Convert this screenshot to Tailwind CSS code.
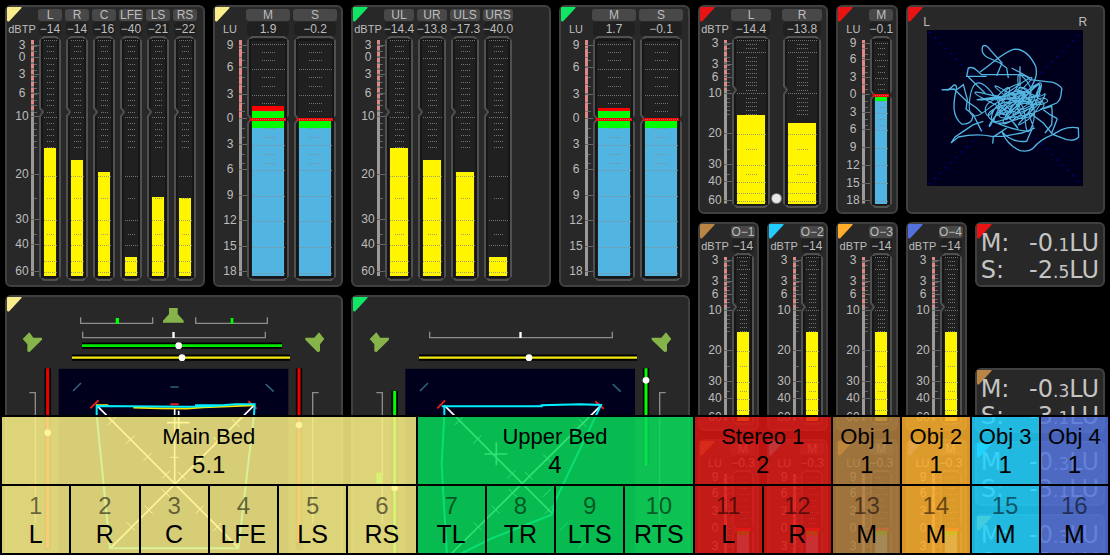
<!DOCTYPE html>
<html lang="en">
<head>
  <meta charset="UTF-8" />
  <meta name="viewport" content="width=device-width, initial-scale=1.0" />
  <title>Loudness Meters</title>
  <script src="https://cdn.jsdelivr.net/npm/@tailwindcss/browser@4"></script>
</head>
<body class="relative h-screen overflow-hidden bg-black font-['Liberation_Sans',Arial,sans-serif] text-xs text-[#bdbdbd]">

  <!-- Meter bridge -->
  <main class="grid h-full grid-cols-[685fr_407fr] items-start gap-2 overflow-hidden p-[5px] pb-0">

    <!-- Beds -->
    <div class="grid grid-cols-[200fr_130fr_200fr_131fr] grid-rows-[282px_338px] gap-2">
      <section data-meter="main-peak"></section>
      <section data-meter="main-lufs"></section>
      <section data-meter="upper-peak"></section>
      <section data-meter="upper-lufs"></section>

      <!-- Main bed surround view -->
      <section class="relative col-span-2 rounded-md border-2 border-[#404040] bg-[#282828]">
        <svg class="absolute top-0 left-0 size-[15px] text-[#f8ec8c]" viewBox="0 0 15 15"><path fill="currentColor" d="M1 0H14Q15 0 14.500 1L2 14.500Q0 15 0 13V1Q0 0 1 0Z" /></svg>
        <svg class="block w-full" viewBox="21 21 1002 774" fill="none">
          <g stroke="#8c8c8c" stroke-width="4">
            <path d="M242 82V100H458V82M587 82V100H802V82M248 125V143H796V125" />
            <path d="M88 308H106V700M956 308H938V700" />
          </g>
          <g fill="#86b44a">
            <path d="M507 54H533V72L551 92V98H489V92L507 72Z" />
            <path d="M68 147L88 127L100 143H126V149L88 187L82 184V163Z" />
            <path d="M973 147L957 127L943 143H916V149L953 187L960 184V163Z" />
          </g>
          <path fill="#00ff00" d="M347 84H357V102H347ZM692 84H700V102H692Z" />
          <path fill="#fff" d="M517 126H524V144H517Z" />
          <path stroke="#000" stroke-width="19" d="M246 167H846M216 203H870M143 235V780M897 235V780" />
          <path stroke="#00e800" stroke-width="8" d="M246 167H846" />
          <path stroke="#f4ea10" stroke-width="7" d="M216 203H870" />
          <path stroke="#f00000" stroke-width="9" d="M143 235V775M897 235V755" />
          <path fill="#00001c" d="M176 236H865V795H176Z" />
          <path stroke="#2a6278" stroke-width="5" d="M219 303L243 279M797 282L821 305M511 291H536" />
          <path stroke="#e02020" stroke-width="6" d="M271 355L296 331M745 334L770 356M511 343H536" />
          <g stroke="#fff" stroke-width="5">
            <path d="M290 346L715 773M762 346L333 773M524 355V582M536 362V430M501 398H569" />
            <path stroke-width="3" d="M323 405L347 382M378 461L403 437M430 513L455 489M487 565L511 541M695 387L719 411M640 441L664 465M588 493L612 517M533 545L557 569M485 597L510 621M434 647L458 671M380 697L404 721M587 671L611 647M640 723L664 699M511 502H536" />
          </g>
          <path stroke="#ffe600" stroke-width="5" d="M288 345H325M400 353L480 355L560 356L610 352L762 346" />
          <path stroke="#00f0ff" stroke-width="6" d="M290 375V348L380 349L560 350L640 348L705 343H764L762 375L715 775H330L290 375M585 346H680" />
          <g fill="#fff">
            <circle cx="536" cy="167" r="10" /><circle cx="546" cy="203" r="10" />
            <circle cx="143" cy="428" r="10" /><circle cx="897" cy="405" r="10" />
          </g>
          <path fill="#f02020" d="M88 582H104V592H88ZM941 582H956V592H941Z" />
        </svg>
      </section>

      <!-- Upper bed surround view -->
      <section class="relative col-span-2 rounded-md border-2 border-[#404040] bg-[#282828]">
        <svg class="absolute top-0 left-0 size-[15px] text-[#10e664]" viewBox="0 0 15 15"><path fill="currentColor" d="M1 0H14Q15 0 14.500 1L2 14.500Q0 15 0 13V1Q0 0 1 0Z" /></svg>
        <svg class="block w-full" viewBox="24 21 1005 774" fill="none">
          <g stroke="#8c8c8c" stroke-width="4">
            <path d="M254 125V143H802V125M94 308H112V700M962 308H944V700" />
          </g>
          <g fill="#86b44a">
            <path d="M74 147L94 127L106 143H132V149L94 187L88 184V163Z" />
            <path d="M979 147L963 127L949 143H920V149L959 187L966 184V163Z" />
          </g>
          <path fill="#fff" d="M523 126H530V144H523Z" />
          <path stroke="#000" stroke-width="19" d="M222 203H876M149 303V795M903 235V527" />
          <path stroke="#f4ea10" stroke-width="7" d="M222 203H876" />
          <path stroke="#00ff00" stroke-width="9" d="M149 303V795M903 235V527" />
          <path fill="#00ff00" d="M94 548H110V580H94Z" />
          <path fill="#00001c" d="M181 236H870V795H181Z" />
          <path stroke="#2a6278" stroke-width="5" d="M225 303L249 279M803 282L827 305M645 721L669 697M700 775L724 751" />
          <path stroke="#e02020" stroke-width="6" d="M277 355L300 331M751 334L776 356" />
          <g stroke="#fff" stroke-width="5">
            <path d="M298 346L622 671M768 346L315 795M418 492H487M454 457V525" />
            <path stroke-width="3" d="M329 405L353 382M384 461L409 437M487 565L511 541M701 387L725 411M594 493L618 517M539 545L563 569M491 597L516 621M440 647L464 671M386 697L410 721M593 621L617 597M600 671L624 647" />
          </g>
          <path stroke="#00f0ff" stroke-width="6" d="M298 375L290 520L294 600L306 795L340 795L440 745L620 674L632 630L768 345L705 343L590 346V349H290M298 348V375" />
          <g fill="#fff">
            <circle cx="552" cy="203" r="10" /><circle cx="903" cy="271" r="10" /><circle cx="149" cy="594" r="10" />
          </g>
          <path fill="#f02020" d="M947 582H962V592H947Z" />
        </svg>
      </section>
    </div>

    <!-- Stereo and objects -->
    <div class="grid grid-cols-6 grid-rows-[209px_209px_209px] gap-2">
      <section data-meter="stereo-peak" class="col-span-2"></section>
      <section data-meter="stereo-lufs"></section>

      <!-- Goniometer -->
      <section class="relative col-span-3 flex flex-col items-center rounded-md border-2 border-[#404040] bg-[#282828] pt-2">
        <svg class="absolute top-0 left-0 size-[15px] text-[#e81414]" viewBox="0 0 15 15"><path fill="currentColor" d="M1 0H14Q15 0 14.500 1L2 14.500Q0 15 0 13V1Q0 0 1 0Z" /></svg>
        <div class="flex w-[164px] justify-between leading-[15px]"><span>L</span><span>R</span></div>
        <svg class="size-[156px] bg-[#00001c]" viewBox="291 91 468 468" fill="none" stroke="#52b4e0" stroke-width="4">
          <path stroke="#0000c0" stroke-dasharray="4 18.500" d="M298 97L754 554M298 554L754 97" />
          <path d="M335 270L355 271L372 256Q383 255 378 272C370 310 365 350 395 373Q415 375 425 362L430 345M336 271L372 268L410 305L440 325L455 340" />
          <path d="M500 228L516 190L480 150Q468 132 458 140Q452 160 470 172L510 190L530 205L535 235M450 217C490 190 515 160 550 149C585 145 605 175 617 200C625 230 610 250 600 270" />
          <path d="M410 230L415 205Q430 200 440 212L455 225L520 225L560 225Q590 225 600 240L670 248Q702 262 694 275Q694 300 680 310L630 330L665 320Q668 340 665 375L645 400" />
          <path d="M415 232L465 280M408 230L470 230M380 270L400 255L412 300L408 330M570 200V260M545 205L600 235" />
          <path d="M363 430L375 412L400 395L430 375L460 365M363 430L385 412Q440 400 485 410H520L575 400L615 385M488 432L490 412L515 395L530 385M455 395L430 345L408 328" />
          <path d="M515 395Q530 435 570 453Q595 458 610 445Q630 420 668 405L695 390Q720 380 745 385L746 412Q735 425 710 420L668 404L640 370L600 340M515 395Q545 430 590 425L605 390M682 357L660 345L640 330M682 357L665 400" />
          <path id="core" stroke-width="3.500" />
        </svg>
      </section>

      <section data-meter="obj1-peak"></section>
      <section data-meter="obj2-peak"></section>
      <section data-meter="obj3-peak"></section>
      <section data-meter="obj4-peak"></section>

      <!-- Numeric readouts -->
      <div id="readouts" class="col-span-2 row-span-2 grid auto-rows-[65px] gap-2 font-['DejaVu_Sans',sans-serif] text-2xl leading-[25px] text-[#c4c4c4]"></div>

      <section data-meter="obj1-lufs"></section>
      <section data-meter="obj2-lufs"></section>
      <section data-meter="obj3-lufs"></section>
      <section data-meter="obj4-lufs"></section>
    </div>
  </main>

  <!-- Channel assignment overlay -->
  <table class="absolute inset-x-0 bottom-0 w-full table-fixed border-collapse text-center text-black">
    <thead class="text-[22px] leading-7">
      <tr class="h-[69px] [&>th]:border-2 [&>th]:border-black [&>th]:p-0 [&>th]:font-normal">
        <th colspan="6" class="bg-[#fdf187]/85">Main Bed<div class="text-2xl leading-7">5.1</div></th>
        <th colspan="4" class="bg-[#08dc5b]/85">Upper Bed<div class="text-2xl leading-7">4</div></th>
        <th colspan="2" class="bg-[#de1914]/85">Stereo 1<div class="text-2xl leading-7">2</div></th>
        <th class="bg-[#b48040]/85">Obj 1<div class="text-2xl leading-7">1</div></th>
        <th class="bg-[#fdaf2b]/85">Obj 2<div class="text-2xl leading-7">1</div></th>
        <th class="bg-[#20d2ff]/85">Obj 3<div class="text-2xl leading-7">1</div></th>
        <th class="bg-[#5374dc]/85">Obj 4<div class="text-2xl leading-7">1</div></th>
      </tr>
    </thead>
    <tbody class="text-[25px] leading-7">
      <tr id="channels" class="h-[69px]"></tr>
    </tbody>
  </table>

  <script>
    const corner = color => `<svg class="absolute top-0 left-0 size-[15px] ${color}" viewBox="0 0 15 15"><path fill="currentColor" d="M1 0H14Q15 0 14.500 1L2 14.500Q0 15 0 13V1Q0 0 1 0Z" /></svg>`;
    const yellow = 'text-[#f8ec8c]', green = 'text-[#10e664]', red = 'text-[#e81414]';
    const brown = 'text-[#b98444]', cyan = 'text-[#22ccff]', orange = 'text-[#ffac2c]', blue = 'text-[#5470dc]';

    // Tick positions are pixels of the tall meter, short meters scale them down
    const scales = {
      dBTP: {
        labels: [[5, '3'], [17, '0'], [34, '3'], [53, '6'], [76, '10'], [134, '20'], [179, '30'], [204, '40'], [231, '60']],
        major: [0, 18, 77, 136, 180, 205, 221, 232],
        minor: [6, 11, 24, 30, 36, 42, 48, 54, 60, 65, 72, 83, 89, 95, 101, 107, 158, 194],
        notch: 72
      },
      LU: {
        labels: [[5, '9'], [27, '6'], [54, '3'], [78, '0'], [104, '3'], [129, '6'], [155, '9'], [180, '12'], [206, '15'], [231, '18']],
        major: [4, 29, 55, 79, 105, 130, 156, 181, 207, 233],
        minor: [12, 20, 37, 46, 63, 71, 88, 97, 114, 123],
        notch: 79
      }
    };

    const peak = top => [['#fff500', top, 236]];
    const lufs = (top, clip) => [['#ff0000', clip, top], ['#00ff00', top, 88], ['#52b4e0', 88, 236]];

    const meters = {
      'main-peak': { color: yellow, unit: 'dBTP', w: 22, gap: 'gap-[5px]', ch: [['L', '−14', peak(108)], ['R', '−14', peak(120)], ['C', '−16', peak(132)], ['LFE', '−40', peak(217)], ['LS', '−21', peak(157)], ['RS', '−22', peak(158)]] },
      'main-lufs': { color: yellow, unit: 'LU', w: 42, gap: 'gap-[5px]', ch: [['M', '1.9', lufs(71, 66)], ['S', '−0.2', lufs(79, 79)]] },
      'upper-peak': { color: green, unit: 'dBTP', w: 28, gap: 'gap-[5px]', ch: [['UL', '−14.4', peak(108)], ['UR', '−13.8', peak(120)], ['ULS', '−17.3', peak(132)], ['URS', '−40.0', peak(217)]] },
      'upper-lufs': { color: green, unit: 'LU', w: 42, gap: 'gap-[5px]', ch: [['M', '1.7', lufs(71, 68)], ['S', '−0.1', lufs(79, 79)]] },
      'stereo-peak': { color: red, unit: 'dBTP', w: 38, gap: 'gap-[13px]', short: true, knob: true, ch: [['L', '−14.4', peak(108)], ['R', '−13.8', peak(120)]] },
      'stereo-lufs': { color: red, unit: 'LU', w: 22, short: true, ch: [['M', '−0.1', lufs(79, 79)]] }
    };
    [brown, cyan, orange, blue].forEach((color, i) => {
      meters[`obj${i + 1}-peak`] = { color, unit: 'dBTP', w: 22, short: true, ch: [[`O−${i + 1}`, '−14', peak(108)]] };
      meters[`obj${i + 1}-lufs`] = { color, unit: 'LU', w: 22, short: true, ch: [['M', '−0.3', lufs(79, 79)]] };
    });

    const drawScale = (unit, h, y) => {
      const s = scales[unit];
      const labels = s.labels.filter(l => h > 200 || l[1] !== '0' || unit === 'LU');
      return `<svg class="block" width="34" height="${h}">
        <path stroke="#9a9a9a" stroke-width="3" d="M27.500 ${y(s.notch)}V${y(236)}" />
        <path stroke="#777" stroke-width="3" d="M27.500 4V${y(s.notch)}" />
        <path stroke="#e08888" stroke-width="3" stroke-dasharray="${unit === 'LU' ? '8 1' : '4 2'}" d="M27.500 4V${y(s.notch)}" />
        <path stroke="#666" d="${s.minor.map(t => `M29 ${Math.round(y(t)) + 0.5}h3`).join('')}${labels.map(l => `M26 ${Math.round(y(l[0])) + 0.5}h8`).join('')}" />
        ${labels.map(l => `<text x="17" y="${Math.round(y(l[0])) + 4}" text-anchor="middle" fill="currentColor">${l[1]}</text>`).join('')}
      </svg>`;
    };

    const drawBar = (unit, w, h, y, bars) => {
      const s = scales[unit], n = Math.round(y(s.notch)), lu = unit === 'LU';
      const right = lu ? `V${n - 4}L${w - 4} ${n}L${w - 1} ${n + 4}` : '';
      const m = w > 30 ? w * 0.34 : w * 0.32;
      return `<svg class="block" width="${w}" height="${h}">
        <path fill="#202020" stroke="#505050" stroke-width="2" d="M5 1H${w - 5}L${w - 1} 5${right}V${h - 5}L${w - 5} ${h - 1}H5L1 ${h - 5}V${n + 4}L4 ${n}L1 ${n - 4}V5Z" />
        <path fill="none" stroke="#161616" stroke-width="2" d="M3 ${n - 4}V4H${w - 3}V${h - 4}H3V${n + 5}" />
        ${bars.map(b => `<rect x="5" y="${Math.round(y(b[1]))}" width="${w - 10}" height="${Math.round(y(b[2])) - Math.round(y(b[1]))}" fill="${b[0]}" />`).join('')}
        ${lu ? `<rect x="3" y="${n - 1}" width="${w - 6}" height="3" fill="#ff0000" />` : ''}
        <path stroke="#8a8a8a" stroke-opacity=".8" stroke-dasharray="1 1" d="${s.major.map(t => `M5 ${Math.round(y(t)) + 0.5}H${w - 4}`).join('')}${s.minor.map(t => `M${Math.round(m) + 1} ${Math.round(y(t)) + 0.5}H${Math.round(w - m)}`).join('')}" />
      </svg>`;
    };

    document.querySelectorAll('[data-meter]').forEach(el => {
      const m = meters[el.dataset.meter];
      const h = m.short ? 172 : 245;
      const y = t => 4 + t * (m.short ? 0.693 : 1);
      el.classList.add(...'relative rounded-md border-2 border-[#404040] bg-[#282828]'.split(' '));
      el.innerHTML = `${corner(m.color)}
        <div class="-ml-0.5 flex pt-0.5">
          <div class="w-[34px] shrink-0 pt-[13px]">
            <div class="h-3.5 text-center text-[11px] leading-[15px]">${m.unit}</div>
            ${drawScale(m.unit, h, y)}
          </div>
          <div class="flex ${m.gap || ''}">
            ${m.ch.map(c => `<div>
              <div class="-mx-px flex h-3 justify-center rounded-[3px] bg-[#484848] leading-[13px]">${c[0]}</div>
              <div class="mt-px flex h-3.5 w-0 min-w-full justify-center whitespace-nowrap rounded-sm bg-[#202020] leading-[15px]">${c[1]}</div>
              ${drawBar(m.unit, m.w, h, y, c[2])}
            </div>`).join('')}
          </div>
        </div>
        ${m.knob ? '<span class="absolute bottom-[9px] left-[72px] size-[9px] rounded-full bg-[#e8e8e8] ring-1 ring-[#777]"></span>' : ''}`;
    });

    // Readouts, null leaves an empty slot
    const readouts = [[red, '0', '1', '2', '5'], null, [brown, '0', '3', '3', '1'], [cyan, '0', '3', '3', '1'], [orange, '0', '3', '3', '1']];
    document.getElementById('readouts').innerHTML = readouts.map(r => r ? `
      <section class="relative rounded-md border-2 border-[#404040] bg-[#282828] px-1 pt-[7px]">
        ${corner(r[0])}
        <div class="relative flex justify-between"><span>M:</span><span>-${r[1]}<span class="text-[17px]">.${r[2]}</span>LU</span></div>
        <div class="relative flex justify-between"><span>S:</span><span>-${r[3]}<span class="text-[17px]">.${r[4]}</span>LU</span></div>
      </section>` : '<div></div>').join('');

    // Channel cells
    const groups = [
      ['bg-[#fdf187]/85', ['L', 'R', 'C', 'LFE', 'LS', 'RS']],
      ['bg-[#08dc5b]/85', ['TL', 'TR', 'LTS', 'RTS']],
      ['bg-[#de1914]/85', ['L', 'R']],
      ['bg-[#b48040]/85', ['M']],
      ['bg-[#fdaf2b]/85', ['M']],
      ['bg-[#20d2ff]/85', ['M']],
      ['bg-[#5374dc]/85', ['M']]
    ];
    let n = 0;
    document.getElementById('channels').innerHTML = groups.map(g => g[1].map(name =>
      `<td class="border-2 border-black p-0 ${g[0]}"><div class="text-2xl leading-7 text-black/55">${++n}</div>${name}</td>`).join('')).join('');

    // Goniometer trace core
    let seed = 11;
    const rnd = () => (seed = seed * 16807 % 2147483647) / 2147483647;
    const pt = () => [Math.round(545 + (rnd() + rnd() - 1) * 155), Math.round(312 + (rnd() + rnd() - 1) * 120)];
    let d = 'M540 300', prev = pt();
    for (let i = 0; i < 100; i++) {
      const p = pt();
      d += `Q${prev[0]} ${prev[1]} ${(prev[0] + p[0]) >> 1} ${(prev[1] + p[1]) >> 1}`;
      prev = p;
    }
    document.getElementById('core').setAttribute('d', d);
  </script>
</body>
</html>
